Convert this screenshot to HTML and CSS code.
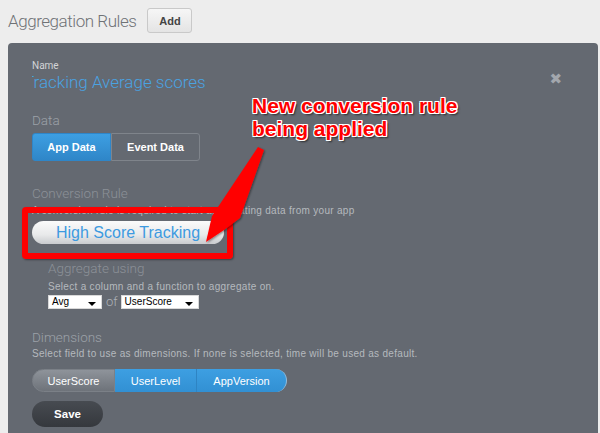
FILE: index.html
```html
<!DOCTYPE html>
<html>
<head>
<meta charset="utf-8">
<link rel="stylesheet" href="styles.css">
</head>
<body>
<div class="page">
  <header class="topbar">
    <h1 class="title">Aggregation Rules</h1>
    <button class="add-btn">Add</button>
  </header>
  <section class="panel">
    <div class="name-row">
      <div class="name-block">
        <div class="name-label">Name</div>
        <div class="name-value"><span class="name-inner">Tracking Average scores</span></div>
      </div>
      <span class="close">&#x2716;</span>
    </div>

    <div class="section data-section">
      <div class="sec-label">Data</div>
      <div class="seg">
        <span class="seg-item active">App Data</span>
        <span class="seg-item">Event Data</span>
      </div>
    </div>

    <div class="section conv-section">
      <div class="sec-label">Conversion Rule</div>
      <div class="desc">A conversion rule is required to start aggregating data from your app</div>
      <div class="pill">High Score Tracking</div>
    </div>

    <div class="agg">
      <div class="sec-label">Aggregate using</div>
      <div class="desc small">Select a column and a function to aggregate on.</div>
      <div class="selects">
        <span class="sel sel-avg">Avg<i class="caret"></i></span>
        <span class="of">of</span>
        <span class="sel sel-col">UserScore<i class="caret"></i></span>
      </div>
    </div>

    <div class="section dim-section">
      <div class="sec-label">Dimensions</div>
      <div class="desc">Select field to use as dimensions. If none is selected, time will be used as default.</div>
      <div class="dims">
        <span class="dim off">UserScore</span>
        <span class="dim on">UserLevel</span>
        <span class="dim on last">AppVersion</span>
      </div>
      <button class="save">Save</button>
    </div>

    <div class="callout-box"></div>
    <svg class="arrow" width="600" height="433" viewBox="0 0 600 433">
      <defs>
        <filter id="sh" x="-20%" y="-20%" width="140%" height="140%">
          <feDropShadow dx="1" dy="1" stdDeviation="1" flood-color="#000" flood-opacity="0.45"/>
        </filter>
      </defs>
      <polygon points="258,147 264,150 240,218 224,230 206,242 212,216" fill="#ff0000" filter="url(#sh)"/>
    </svg>
    <div class="callout-text">New conversion rule<br>being applied</div>
  </section>
</div>
</body>
</html>
```

FILE: styles.css
```css
* { box-sizing: border-box; }
html, body { margin: 0; padding: 0; }
body {
  width: 600px;
  height: 433px;
  overflow: hidden;
  background: #ededed;
  font-family: "Roboto", "Liberation Sans", sans-serif;
}
.page { padding: 0 2px 0 8px; }
.topbar {
  display: flex;
  align-items: center;
  height: 43px;
  gap: 11px;
  padding-bottom: 2px;
}
.title {
  margin: 0;
  font-weight: 300;
  font-size: 17px;
  color: #6f7276;
  letter-spacing: -0.45px;
}
.add-btn {
  width: 45px;
  height: 25px;
  border: 1px solid #c9c9c9;
  border-radius: 3px;
  background: linear-gradient(#f6f6f6, #e4e4e4);
  font-family: "Liberation Sans", sans-serif;
  font-weight: bold;
  font-size: 11px;
  color: #444;
  padding: 0;
}
.panel {
  position: relative;
  background: #646971;
  border-radius: 4px 4px 0 0;
  height: 390px;
  padding: 17px 24px 0 24px;
}
.name-row {
  display: flex;
  justify-content: space-between;
}
.name-label {
  font-size: 10px;
  color: #d2d4d7;
  line-height: 12px;
}
.name-value {
  width: 190px;
  overflow: hidden;
  white-space: nowrap;
}
.name-inner {
  display: inline-block;
  margin-left: -8px;
  font-weight: 300;
  font-size: 17px;
  color: #4aa3e2;
  line-height: 20px;
  white-space: nowrap;
}
.close {
  color: #a3a7ad;
  font-size: 15px;
  margin-top: 10px;
  margin-right: 12px;
  font-family: "DejaVu Sans", sans-serif;
  font-weight: bold;
}
.sec-label {
  font-weight: 300;
  font-size: 13.5px;
  color: #9ca1a8;
  line-height: 16px;
}
.data-section { margin-top: 20px; }
.seg {
  display: flex;
  margin-top: 5px;
  width: 168px;
  height: 28px;
}
.seg-item {
  flex: 1;
  display: flex;
  align-items: center;
  justify-content: center;
  font-family: "Liberation Sans", sans-serif;
  font-weight: bold;
  font-size: 11px;
  color: #fff;
  border: 1px solid #7f848b;
  border-radius: 0 3px 3px 0;
}
.seg-item.active {
  flex: 0 0 79px;
  background: linear-gradient(#3d9fe2, #2f86c8);
  border-color: #2f86c8;
  border-radius: 3px 0 0 3px;
}
.conv-section { margin-top: 24px; }
.conv-section .sec-label { color: #8c9198; }
.desc {
  font-family: "Liberation Sans", sans-serif;
  font-size: 10px;
  letter-spacing: 0.3px;
  color: #b5b9be;
  margin-top: 4px;
  line-height: 12px;
  white-space: nowrap;
}
.pill {
  margin-top: 4px;
  width: 192px;
  height: 23px;
  border-radius: 12px;
  background: linear-gradient(#fbfbfb, #e8e9ea 60%, #c9cbce);
  color: #3d9ae0;
  font-family: "Liberation Sans", sans-serif;
  font-size: 16px;
  display: flex;
  align-items: center;
  justify-content: center;
}
.agg { margin-top: 16px; padding-left: 16px; }
.agg .sec-label { color: #8c9198; }
.desc.small { margin-top: 5px; }
.selects {
  display: flex;
  align-items: center;
  gap: 4px;
  margin-top: 2px;
}
.sel {
  position: relative;
  height: 14px;
  background: #fff;
  border: 1px solid #d9d9d9;
  font-family: "Liberation Sans", sans-serif;
  font-size: 10px;
  color: #000;
  line-height: 12px;
  padding-left: 3px;
}
.sel-avg { width: 54px; }
.sel-col { width: 78px; margin-left: -1px; }
.caret {
  position: absolute;
  right: 5px;
  top: 6px;
  border-left: 4px solid transparent;
  border-right: 4px solid transparent;
  border-top: 4px solid #000;
}
.of {
  font-size: 13px;
  color: #aeb2b7;
  font-weight: 300;
  line-height: 14px;
}
.dim-section { margin-top: 20px; }
.dim-section .sec-label { color: #9ca1a8; }
.dim-section .desc { margin-top: 3px; }
.dims {
  display: flex;
  margin-top: 9px;
  height: 23px;
  width: 255px;
}
.dim {
  display: flex;
  align-items: center;
  justify-content: center;
  font-family: "Liberation Sans", sans-serif;
  font-size: 11px;
  color: #fff;
}
.dim.off {
  width: 83px;
  border-radius: 12px 0 0 12px;
  background: linear-gradient(#8e939a, #6e737a);
  border: 1px solid #7b8087;
}
.dim.on {
  width: 82px;
  background: linear-gradient(#3d9fe2, #3290d3);
  border-right: 1px solid #2e84c3;
}
.dim.on.last {
  width: 90px;
  border-radius: 0 12px 12px 0;
  border-right: 1px solid #8fbde0;
}
.save {
  margin-top: 9px;
  width: 71px;
  height: 26px;
  border: none;
  border-radius: 13px;
  background: linear-gradient(#474b51, #35383d);
  color: #fff;
  font-family: "Liberation Sans", sans-serif;
  font-weight: bold;
  font-size: 11.5px;
  padding: 0;
}
.callout-box {
  position: absolute;
  left: 14px;
  top: 164px;
  width: 211px;
  height: 52px;
  border: 6px solid #ff0000;
  border-radius: 4px;
  box-shadow: 1px 1px 2px rgba(0,0,0,0.4);
}
.arrow {
  position: absolute;
  left: -8px;
  top: -43px;
  pointer-events: none;
}
.callout-text {
  position: absolute;
  left: 244px;
  top: 51px;
  font-family: "Liberation Sans", sans-serif;
  font-weight: bold;
  font-size: 21px;
  line-height: 23px;
  color: #ff0000;
  text-shadow: -1px -1px 0 #fff, 1px -1px 0 #fff, -1px 1px 0 #fff, 1px 1px 0 #fff, 0 1px 0 #fff, 1px 0 0 #fff, 2px 2px 2px rgba(0,0,0,0.6);
}
```
